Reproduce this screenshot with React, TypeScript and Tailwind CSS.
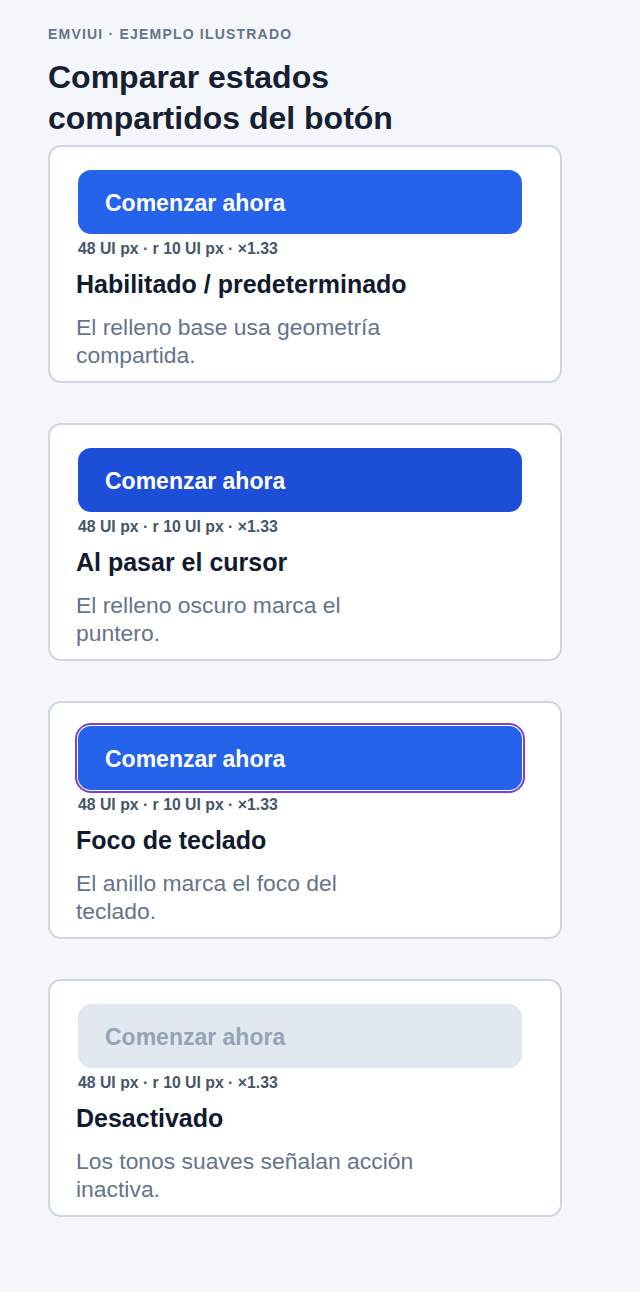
type ButtonState = "default" | "hover" | "focus" | "disabled";

type StateCardProps = {
  state: ButtonState;
  title: string;
  description: string;
};

const BUTTON_CLASSES: Record<ButtonState, string> = {
  default: "bg-[#2563eb] text-white",
  hover: "bg-[#1d4ed8] text-white",
  focus: "bg-[#2563eb] text-white ring-2 ring-[#7f3fd0] ring-offset-1 ring-offset-white",
  disabled: "bg-[#e2e8f0] text-[#94a3b8]",
};

const STATES: StateCardProps[] = [
  {
    state: "default",
    title: "Habilitado / predeterminado",
    description: "El relleno base usa geometría compartida.",
  },
  {
    state: "hover",
    title: "Al pasar el cursor",
    description: "El relleno oscuro marca el puntero.",
  },
  {
    state: "focus",
    title: "Foco de teclado",
    description: "El anillo marca el foco del teclado.",
  },
  {
    state: "disabled",
    title: "Desactivado",
    description: "Los tonos suaves señalan acción inactiva.",
  },
];

function StateCard({ state, title, description }: StateCardProps) {
  return (
    <li className="h-[238px] rounded-[13px] border-2 border-[#cdd6e2] bg-white px-[26px] pt-[23px]">
      <button
        type="button"
        disabled={state === "disabled"}
        className={`mx-[2px] flex h-16 w-[444px] items-center rounded-[13px] pl-[27px] pt-[2px] text-[23px] font-bold ${BUTTON_CLASSES[state]}`}
      >
        Comenzar ahora
      </button>
      <p className="mt-[7px] pl-[2px] text-[15.8px] font-bold leading-4 text-[#475569]">
        48 UI px · r 10 UI px · ×1.33
      </p>
      <h2 className="mt-[13px] text-[25px] font-bold leading-7 text-[#111a2e]">{title}</h2>
      <p className="mt-[15px] max-w-[341px] text-[22.9px] leading-7 text-[#64748b]">{description}</p>
    </li>
  );
}

export default function App() {
  return (
    <div
      className="min-h-[1292px] bg-[#f4f6fa] pl-12 pt-[26px]"
      style={{ fontFamily: '"Liberation Sans", Arial, sans-serif' }}
    >
      <div className="w-[514px]">
        <p className="text-[14px] font-bold uppercase leading-4 tracking-[1.2px] text-[#64748b]">
          EMVIUI · Ejemplo ilustrado
        </p>
        <h1 className="mt-[15px] text-[32px] font-bold leading-[41px] text-[#172033]">
          Comparar estados
          <br />
          compartidos del botón
        </h1>
        <ul className="mt-[6px] flex flex-col gap-10">
          {STATES.map((s) => (
            <StateCard key={s.state} {...s} />
          ))}
        </ul>
      </div>
    </div>
  );
}
